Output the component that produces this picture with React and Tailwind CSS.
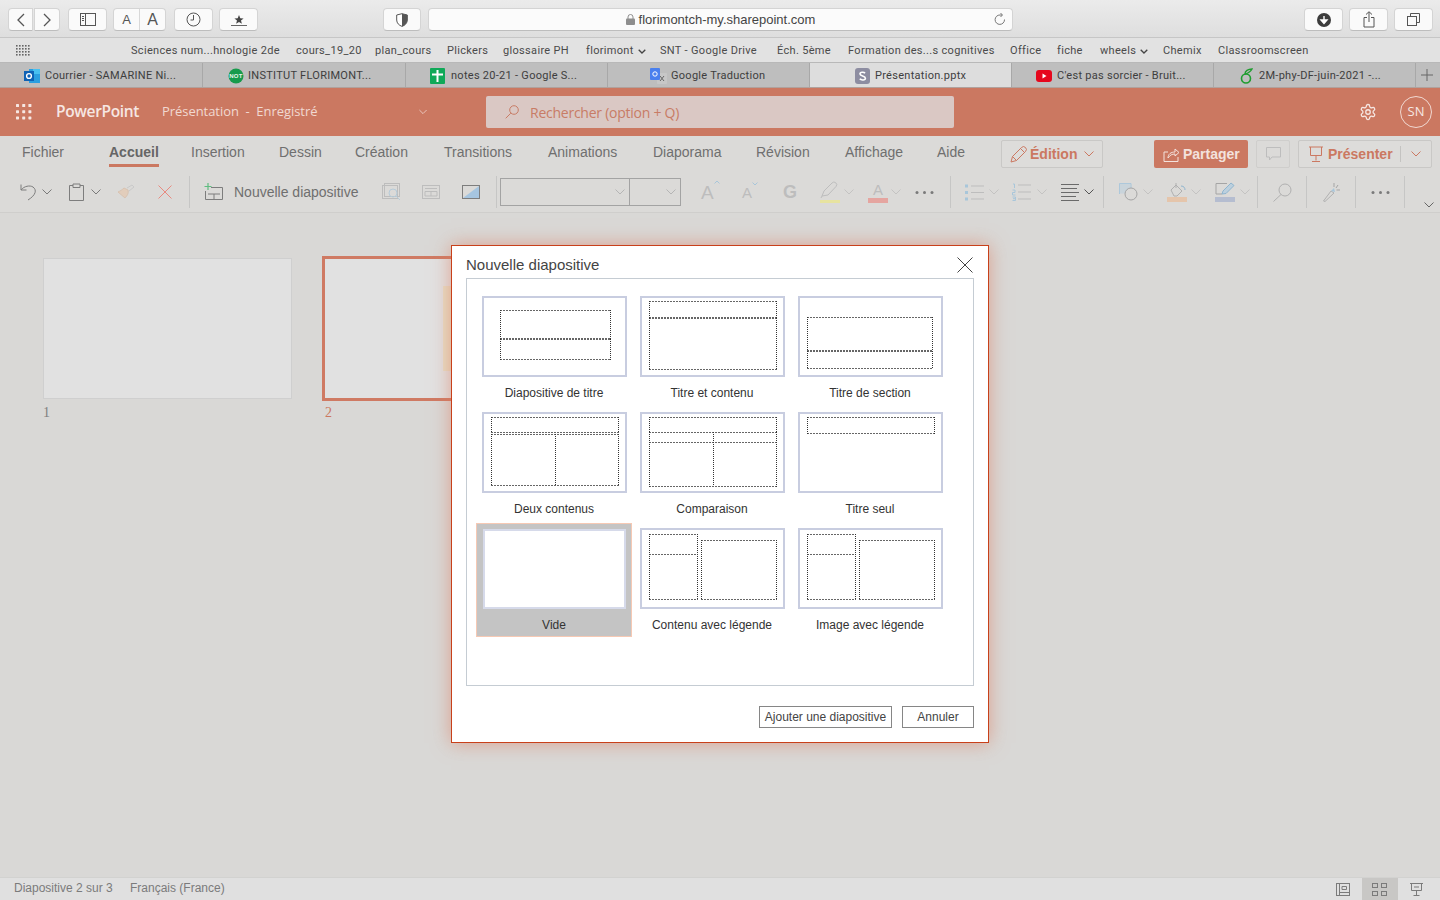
import React from "react";

const I = ({ w = 18, h = 18, c = "", children, sw = 1 }) => (
  <svg width={w} height={h} viewBox={`0 0 ${w} ${h}`} fill="none" stroke="currentColor" strokeWidth={sw} className={`shrink-0 ${c}`}>
    {children}
  </svg>
);

const Chev = ({ c = "", color = "text-[#b5b5b5]" }) => (
  <I w={10} h={6} c={`${color} ${c}`}><path d="M0.5 0.5 L5 5 L9.5 0.5" /></I>
);

const MiniChev = () => (
  <svg width="8" height="5" viewBox="0 0 8 5" fill="none" stroke="#444" strokeWidth="1.3" className="ml-[4px] shrink-0"><path d="M0.7 0.7 L4 4 L7.3 0.7" /></svg>
);

const Sep = ({ c = "" }) => <div className={`w-px h-[32px] bg-[#c6c6c5] shrink-0 ${c}`} />;

const MacBtn = ({ c = "", children }) => (
  <div className={`h-[23px] flex items-center justify-center bg-[#fafafa] border border-[#d4d4d4] border-b-[#bdbdbd] rounded-[4px] text-[#555] shrink-0 ${c}`}>
    {children}
  </div>
);

const marks = [
  ["Sciences num...hnologie 2de", "w-[165px]"],
  ["cours_19_20", "w-[79px]"],
  ["plan_cours", "w-[72px]"],
  ["Plickers", "w-[56px]"],
  ["glossaire PH", "w-[83px]"],
  ["florimont", "w-[74px]", true],
  ["SNT - Google Drive", "w-[117px]"],
  ["Éch. 5ème", "w-[71px]"],
  ["Formation des...s cognitives", "w-[162px]"],
  ["Office", "w-[47px]"],
  ["fiche", "w-[43px]"],
  ["wheels", "w-[63px]", true],
  ["Chemix", "w-[55px]"],
  ["Classroomscreen", "w-[110px]"],
];

const Fav = {
  outlook: (
    <svg width="16" height="16" viewBox="0 0 16 16" className="shrink-0">
      <rect x="5" y="1" width="11" height="14" fill="#2b9fe0" />
      <rect x="9" y="1" width="7" height="5" fill="#48c0f0" />
      <rect x="0" y="3" width="10" height="10" fill="#0f62b5" />
      <circle cx="5" cy="8" r="2.4" fill="none" stroke="#fff" strokeWidth="1.4" />
    </svg>
  ),
  not: (
    <svg width="16" height="16" viewBox="0 0 16 16" className="shrink-0">
      <circle cx="8" cy="8" r="7.5" fill="#179b4c" />
      <text x="8" y="10" textAnchor="middle" fontSize="6" fontWeight="700" fill="#e9f6ee" fontFamily="Liberation Sans">NOT</text>
    </svg>
  ),
  sheets: (
    <svg width="15" height="16" viewBox="0 0 15 16" className="shrink-0">
      <rect width="15" height="16" rx="1" fill="#0fa958" />
      <path d="M2 6.5 H13 M7.5 2 V14" stroke="#fff" strokeWidth="2" />
    </svg>
  ),
  translate: (
    <svg width="17" height="16" viewBox="0 0 17 16" className="shrink-0">
      <rect x="7" y="5" width="10" height="11" rx="1" fill="#c7c7c7" />
      <path d="M10 13 L14 8 M10 8 L14 13" stroke="#666" strokeWidth="1" />
      <rect width="10" height="12" rx="1" fill="#4a80ee" />
      <circle cx="5" cy="6" r="2.2" fill="none" stroke="#fff" strokeWidth="1" />
    </svg>
  ),
  s: (
    <svg width="15" height="16" viewBox="0 0 15 16" className="shrink-0">
      <rect width="15" height="16" rx="3" fill="#8d8da1" />
      <path d="M10 5.2 C9 3.8 5 3.8 5 6 C5 8.3 10.4 7.7 10.4 10.2 C10.4 12.4 6 12.4 4.8 10.8" fill="none" stroke="#fff" strokeWidth="1.6" />
    </svg>
  ),
  yt: (
    <svg width="16" height="12" viewBox="0 0 16 12" className="shrink-0">
      <rect width="16" height="12" rx="3" fill="#e6071d" />
      <path d="M6.5 3.5 L10.5 6 L6.5 8.5 Z" fill="#fff" />
    </svg>
  ),
  sheet2: (
    <svg width="13" height="16" viewBox="0 0 13 16" fill="none" className="shrink-0">
      <circle cx="6" cy="10.5" r="4.5" stroke="#1f9d2f" strokeWidth="1.6" />
      <path d="M5 6 C5 3 8 1 12 1 C11 3 9 5 5 6 Z" stroke="#1f9d2f" strokeWidth="1.4" />
    </svg>
  ),
};

const tabs = [
  ["Courrier - SAMARINE Ni...", "outlook", "w-[203px] pl-[24px]", "ml-[5px]"],
  ["INSTITUT FLORIMONT...", "not", "w-[203px] pl-[25px]", "ml-[4px]"],
  ["notes 20-21 - Google S...", "sheets", "w-[202px] pl-[24px]", "ml-[6px]"],
  ["Google Traduction", "translate", "w-[202px] pl-[42px]", "ml-[4px]"],
  ["Présentation.pptx", "s", "w-[202px] pl-[45px] bg-[#dddddd]", "ml-[5px]"],
  ["C'est pas sorcier - Bruit...", "yt", "w-[202px] pl-[24px]", "ml-[5px]"],
  ["2M-phy-DF-juin-2021 -...", "sheet2", "w-[202px] pl-[26px]", "ml-[6px]"],
];

const ribbon = [
  ["Fichier", "w-[87px]"],
  ["Accueil", "w-[82px]", true],
  ["Insertion", "w-[88px]"],
  ["Dessin", "w-[76px]"],
  ["Création", "w-[89px]"],
  ["Transitions", "w-[104px]"],
  ["Animations", "w-[105px]"],
  ["Diaporama", "w-[103px]"],
  ["Révision", "w-[89px]"],
  ["Affichage", "w-[92px]"],
  ["Aide", "w-[64px]"],
];

const D = ({ x, y, w, h }) => (
  <g fill="none" strokeWidth="1">
    <path d={`M${x} ${y + 0.5} H${x + w + 1} M${x} ${y + h + 0.5} H${x + w + 1}`} stroke="#666" strokeDasharray="2 1" />
    <path d={`M${x + 0.5} ${y} V${y + h + 1} M${x + w + 0.5} ${y} V${y + h + 1}`} stroke="#333" strokeDasharray="1 1" />
  </g>
);

const V = ({ x, y, h }) => (
  <path d={`M${x + 0.5} ${y} V${y + h}`} fill="none" stroke="#333" strokeWidth="1" strokeDasharray="1 1" />
);

const layouts = [
  { n: "Diapositive de titre", r: [[18, 14, 110, 28], [18, 43, 110, 20]] },
  { n: "Titre et contenu", r: [[9, 5, 127, 16], [9, 22, 127, 51]] },
  { n: "Titre de section", r: [[9, 21, 125, 33], [9, 55, 125, 17]] },
  { n: "Deux contenus", r: [[9, 5, 127, 15], [9, 22, 127, 51]], v: [73, 22, 51] },
  { n: "Comparaison", r: [[9, 5, 127, 15], [9, 20, 127, 10], [9, 30, 127, 44]], v: [73, 20, 54] },
  { n: "Titre seul", r: [[9, 5, 127, 16]] },
  { n: "Vide", r: [], sel: true },
  { n: "Contenu avec légende", r: [[9, 6, 48, 20], [9, 26, 48, 45], [61, 12, 75, 59]] },
  { n: "Image avec légende", r: [[9, 6, 48, 20], [9, 26, 48, 45], [61, 12, 75, 59]] },
];

const Tile = ({ n, r, sel, v }) => (
  <div className={sel ? "w-[156px] h-[114px] mt-px border border-[#f6c9b4] bg-[#c4c4c4] pt-[5px] pl-[6px]" : "w-[156px] h-[116px] pt-[6px] pl-[6px]"}>
    <div className={sel ? "w-[143px] h-[80px] bg-white border-2 border-[#d6daea]" : "w-[145px] h-[81px] bg-white border-2 border-[#c8cde0]"}>
      {!sel && (
        <svg width="141" height="77" viewBox="2 2 141 77" shapeRendering="crispEdges" className="block">
          {r.map((q, i) => <D key={i} x={q[0]} y={q[1]} w={q[2]} h={q[3]} />)}
          {v && <V x={v[0]} y={v[1]} h={v[2]} />}
        </svg>
      )}
    </div>
    <div className={`text-[12px] text-[#333] text-center h-[32px] leading-[32px] ${sel ? "w-[142px]" : "w-[144px]"}`}>{n}</div>
  </div>
);

export default function App() {
  return (
    <div className="relative w-[1440px] h-[900px] overflow-hidden flex flex-col bg-[#d9d8d6] font-['Liberation_Sans',Arial,sans-serif]">
      {/* Safari toolbar */}
      <div className="h-[38px] shrink-0 flex items-center pt-[2px] bg-gradient-to-b from-[#ebebeb] to-[#dedede] border-b border-[#c6c6c6]">
        <MacBtn c="ml-[8px] w-[25px] rounded-r-none"><I w={10} h={14}><path d="M8 1 L2 7 L8 13" strokeWidth="1.3" /></I></MacBtn>
        <MacBtn c="ml-px w-[26px] rounded-l-none"><I w={10} h={14}><path d="M2 1 L8 7 L2 13" strokeWidth="1.3" /></I></MacBtn>
        <MacBtn c="ml-[8px] w-[39px]"><I w={16} h={13}><rect x="0.5" y="0.5" width="15" height="12" /><path d="M5.5 1 V12 M2 3.5 H4 M2 5.5 H4 M2 7.5 H4" /></I></MacBtn>
        <MacBtn c="ml-[6px] w-[53px] text-[#555]">
          <span className="text-[13px] w-[26px] text-center">A</span>
          <span className="w-px h-[21px] bg-[#d8d8d8]" />
          <span className="text-[16px] w-[26px] text-center">A</span>
        </MacBtn>
        <MacBtn c="ml-[8px] w-[39px]"><I w={15} h={15}><circle cx="7.5" cy="7.5" r="6.5" /><path d="M7.5 3 V8 H4.5" /></I></MacBtn>
        <MacBtn c="ml-[6px] w-[39px]">
          <svg width="16" height="12" viewBox="0 0 16 12" className="shrink-0"><path d="M8 1 L9.3 4.2 L12.6 4.4 L10 6.5 L10.9 9.7 L8 7.9 L5.1 9.7 L6 6.5 L3.4 4.4 L6.7 4.2 Z" fill="#444" /><path d="M0 11.5 H16" stroke="#666" /></svg>
        </MacBtn>
        <MacBtn c="ml-[125px] w-[38px]">
          <svg width="12" height="14" viewBox="0 0 12 14" className="shrink-0"><path d="M6 0.7 L11.3 2 V7 C11.3 10 9 12.4 6 13.4 C3 12.4 0.7 10 0.7 7 V2 Z" fill="#fff" stroke="#555" /><path d="M6 0.7 V13.4 C9 12.4 11.3 10 11.3 7 V2 Z" fill="#555" /></svg>
        </MacBtn>
        <div className="ml-[7px] w-[585px] h-[23px] relative flex items-center justify-center bg-[#fbfbfb] border border-[#d4d4d4] border-b-[#bdbdbd] rounded-[4px] text-[13px] text-[#444]">
          <svg width="9" height="11" viewBox="0 0 9 11" className="mr-[4px] shrink-0"><rect y="4.5" width="9" height="6.5" rx="1" fill="#8e8e8e" /><path d="M2 5 V3 A2.5 2.5 0 0 1 7 3 V5" fill="none" stroke="#8e8e8e" /></svg>
          florimontch-my.sharepoint.com
          <svg width="12" height="13" viewBox="0 0 12 13" fill="none" stroke="#777" className="absolute right-[6px] top-[4px]"><path d="M10.5 6.5 A4.7 4.7 0 1 1 6 2 H8 M6.5 0 L8.5 2 L6.5 4" /></svg>
        </div>
        <MacBtn c="ml-[291px] w-[39px]">
          <svg width="14" height="14" viewBox="0 0 14 14" className="shrink-0"><circle cx="7" cy="7" r="7" fill="#3c3c3c" /><path d="M7 3 V8 M4 7 L7 10.5 L10 7 Z" stroke="#fff" fill="#fff" strokeWidth="1.4" /></svg>
        </MacBtn>
        <MacBtn c="ml-[6px] w-[39px]"><I w={12} h={17}><path d="M6 11 V1 M3 3.5 L6 0.7 L9 3.5 M4 6.5 H1 V16 H11 V6.5 H8" /></I></MacBtn>
        <MacBtn c="ml-[6px] w-[39px]"><I w={13} h={13}><rect x="0.5" y="3.5" width="9" height="9" /><path d="M3.5 3.5 V0.5 H12.5 V9.5 H9.5" /></I></MacBtn>
      </div>

      {/* Bookmarks */}
      <div className="h-[25px] shrink-0 flex items-center pt-[3px] bg-[#e2e2e2] border-b border-[#b8b8b8] text-[11px] text-[#4a4a4a] font-['Roboto',sans-serif] tracking-[0.32px]">
        <svg width="15" height="12" viewBox="0 0 15 12" className="ml-[16px] mr-[100px] shrink-0 -mt-[2px]" fill="#666">
          {[0, 1, 2, 3].flatMap((y) => [0, 1, 2, 3, 4].map((x) => <rect key={`${x}${y}`} x={x * 3} y={y * 3} width="1.6" height="1.6" />))}
        </svg>
        {marks.map(([t, w, ch]) => (
          <div key={t} className={`${w} flex items-center shrink-0 whitespace-nowrap`}>
            {t}
            {ch && <MiniChev />}
          </div>
        ))}
      </div>

      {/* Tabs */}
      <div className="h-[25px] shrink-0 flex items-center bg-[#bebebe] border-b border-[#b0a29d] text-[11px] text-[#3d3d3d] font-['Roboto',sans-serif] tracking-[0.28px]">
        {tabs.map(([t, f, c, m]) => (
          <div key={t} className={`${c} h-full flex items-center pt-[2px] shrink-0 border-r border-[#a8a8a8] whitespace-nowrap`}>
            {Fav[f]}
            <span className={m}>{t}</span>
          </div>
        ))}
        <I w={12} h={12} c="ml-[5px] text-[#666]"><path d="M6 0 V12 M0 6 H12" /></I>
      </div>

      {/* PowerPoint header */}
      <div className="h-[48px] shrink-0 flex items-center bg-[#cb7861] text-[#f6e7e3] font-['Open_Sans',sans-serif]">
        <svg width="16" height="16" viewBox="0 0 16 16" fill="#f6e7e3" className="ml-[16px] shrink-0">
          {[0, 1, 2].flatMap((y) => [0, 1, 2].map((x) => <rect key={`${x}${y}`} x={x * 6.2} y={y * 6.2} width="3" height="3" rx="0.6" />))}
        </svg>
        <span className="ml-[24px] w-[106px] text-[15.5px] font-semibold tracking-[-0.35px]">PowerPoint</span>
        <span className="text-[13px] w-[257px] text-[#f1d8d1] tracking-[-0.05px] whitespace-pre">Présentation  -  Enregistré</span>
        <Chev c="!w-[8px]" color="text-[#f1d8d1]" />
        <div className="ml-[59px] w-[468px] h-[32px] rounded-[2px] bg-[#dac8c4] flex items-center text-[#c87c66] text-[14px] tracking-[-0.25px] shrink-0">
          <I w={14} h={14} c="ml-[19px]"><circle cx="9" cy="5" r="4.3" /><path d="M5.8 8.2 L0.7 13.3" /></I>
          <span className="ml-[11px]">Rechercher (option + Q)</span>
        </div>
        <svg width="18" height="18" viewBox="0 0 24 24" fill="none" stroke="#f6e7e3" strokeWidth="1.7" className="ml-[405px] shrink-0">
          <path d="M12.2 2h-.4a2 2 0 0 0-2 2v.2a2 2 0 0 1-1 1.7l-.4.3a2 2 0 0 1-2 0l-.2-.1a2 2 0 0 0-2.7.7l-.2.4a2 2 0 0 0 .7 2.7l.2.1a2 2 0 0 1 1 1.7v.5a2 2 0 0 1-1 1.8l-.2.1a2 2 0 0 0-.7 2.7l.2.4a2 2 0 0 0 2.7.7l.2-.1a2 2 0 0 1 2 0l.4.3a2 2 0 0 1 1 1.7v.2a2 2 0 0 0 2 2h.4a2 2 0 0 0 2-2v-.2a2 2 0 0 1 1-1.7l.4-.3a2 2 0 0 1 2 0l.2.1a2 2 0 0 0 2.7-.7l.2-.4a2 2 0 0 0-.7-2.7l-.2-.1a2 2 0 0 1-1-1.8v-.5a2 2 0 0 1 1-1.7l.2-.1a2 2 0 0 0 .7-2.7l-.2-.4a2 2 0 0 0-2.7-.7l-.2.1a2 2 0 0 1-2 0l-.4-.3a2 2 0 0 1-1-1.7V4a2 2 0 0 0-2-2z" />
          <circle cx="12" cy="12" r="3" />
        </svg>
        <div className="ml-[23px] w-[32px] h-[32px] rounded-full border border-[#f1d8d1] flex items-center justify-center text-[13px] shrink-0">SN</div>
      </div>

      {/* Ribbon tabs */}
      <div className="h-[40px] shrink-0 flex items-start bg-[#dbdad8] text-[14px] text-[#6f6f6f]">
        <div className="w-[22px] shrink-0" />
        {ribbon.map(([t, w, active]) => (
          <div key={t} className={`${w} shrink-0 pt-[8px] -mt-[2px]`}>
            <span className={active ? "inline-block h-[25px] border-b-[3px] border-[#cb7861] font-bold text-[#666]" : "inline-block h-[25px]"}>{t}</span>
          </div>
        ))}
        <div className="mt-[4px] w-[102px] h-[28px] shrink-0 rounded-[2px] border border-[#c9c8c6] bg-[#dddcda] flex items-center text-[#cb7861] font-bold">
          <I w={17} h={17} c="ml-[8px]"><path d="M1 16 L2.5 10.5 L11.5 1.5 A1.5 1.5 0 0 1 15.5 5.5 L6.5 14.5 Z M10.5 2.5 L14.5 6.5 M2.5 10.5 L6.5 14.5" /></I>
          <span className="ml-[3px]">Édition</span>
          <Chev c="ml-[7px]" color="text-[#cb7861]" />
        </div>
        <div className="ml-[51px] mt-[4px] w-[94px] h-[28px] shrink-0 rounded-[2px] bg-[#cb7861] flex items-center text-[#f3e2dd] font-bold">
          <I w={16} h={16} c="ml-[9px]"><path d="M1 15.5 V6 H5 M15 11 V15.5 H1 M5 12 C5 8 8 6 12 6 V3 L16 6.5 L12 10 V8 C9 8 7 9 5 12 Z" /></I>
          <span className="ml-[4px]">Partager</span>
        </div>
        <div className="ml-[8px] mt-[4px] w-[34px] h-[28px] shrink-0 rounded-[2px] border border-[#cfcecc] flex items-center justify-center text-[#bdbdbd]">
          <I w={15} h={14}><path d="M0.5 0.5 H14.5 V10 H6 L3.5 13 V10 H0.5 Z" /></I>
        </div>
        <div className="ml-[8px] mt-[4px] w-[134px] h-[28px] shrink-0 rounded-[2px] border border-[#c9c8c6] bg-[#dddcda] flex items-center text-[#cb7861] font-bold">
          <I w={14} h={16} c="ml-[10px]"><path d="M0 1 H14 M1.5 1 V9.5 H12.5 V1 M7 9.5 V14.5 M3 15.5 H11" /></I>
          <span className="ml-[5px]">Présenter</span>
          <span className="ml-[7px] w-px h-[16px] bg-[#c4c3c1]" />
          <Chev c="ml-[10px]" color="text-[#cb7861]" />
        </div>
      </div>

      {/* Command bar */}
      <div className="h-[37px] shrink-0 flex items-center pb-[4px] bg-[#dbdad8] border-b border-[#cfcecc] text-[#8a8a8a]">
        <I w={18} h={18} c="ml-[20px] text-[#7d7d7d]"><path d="M1 1.5 V7 H6.5 M1 7 C4 3 10 2 13 4 C17 7 16 12 8 17" /></I>
        <Chev c="ml-[4px]" color="text-[#7a7a7a]" />
        <I w={15} h={18} c="ml-[17px] text-[#7d7d7d]"><path d="M4 2.5 H0.5 V17.5 H14.5 V2.5 H11 M4 1 H11 V4.5 H4 Z" /></I>
        <Chev c="ml-[7px]" color="text-[#7a7a7a]" />
        <svg width="18" height="16" viewBox="0 0 18 16" fill="none" stroke="#d8c3b2" className="ml-[16px] shrink-0"><path d="M1 8 L8 14 C10 12 12 9 11 6 L7 4 C5 6 3 7 1 8 Z" fill="#e2cdbb" /><path d="M10 4 L15 1 L17 3 L12 7" stroke="#c9c9c9" /></svg>
        <I w={14} h={14} c="ml-[23px] text-[#e88a80]"><path d="M0.5 0.5 L13.5 13.5 M13.5 0.5 L0.5 13.5" /></I>
        <Sep c="ml-[17px]" />
        <svg width="20" height="18" viewBox="0 0 20 18" fill="none" className="ml-[14px] shrink-0"><path d="M7 4.5 H18.5 V16.5 H1.5 V8 M4 11 H16 M10 11 V16" stroke="#7d7d7d" /><path d="M4 0 V7 M0.5 3.5 H7.5" stroke="#5fbd80" strokeWidth="1.2" /></svg>
        <span className="ml-[10px] w-[124px] text-[14px] text-[#6f6f6f] whitespace-nowrap">Nouvelle diapositive</span>
        <svg width="20" height="18" viewBox="0 0 20 18" fill="none" stroke="#bdbdbd" className="ml-[24px] shrink-0"><rect x="2.5" y="0.5" width="15" height="13" /><rect x="0.5" y="2.5" width="15" height="13" /><circle cx="11" cy="10" r="4" stroke="#b6cbd8" /><path d="M14 13 L18 17" stroke="#b6cbd8" /></svg>
        <I w={18} h={14} c="ml-[20px] text-[#bdbdbd]"><rect x="0.5" y="0.5" width="17" height="13" /><path d="M3 3.5 H15 M3 6.5 H15 V11 H3 Z M9 6.5 V11" /></I>
        <svg width="18" height="14" viewBox="0 0 18 14" className="ml-[22px] shrink-0"><path d="M1 13 L17 1 V13 Z" fill="#a6c5e0" /><rect x="0.5" y="0.5" width="17" height="13" fill="none" stroke="#7d7d7d" /></svg>
        <Sep c="ml-[16px]" />
        <div className="ml-[3px] w-[181px] h-[28px] shrink-0 border border-[#a3a3a3] flex">
          <div className="w-[129px] border-r border-[#a3a3a3] flex items-center justify-end pr-[4px]"><Chev /></div>
          <div className="flex-1 flex items-center justify-end pr-[4px]"><Chev /></div>
        </div>
        <div className="ml-[20px] w-[18px] shrink-0 relative text-[19px] text-[#bdbdbd] leading-none">
          A
          <svg width="6" height="4" viewBox="0 0 6 4" fill="none" stroke="#a8c6da" className="absolute left-[13px] top-[-3px]"><path d="M0.5 3.5 L3 1 L5.5 3.5" /></svg>
        </div>
        <div className="ml-[23px] w-[17px] shrink-0 relative text-[15px] text-[#bdbdbd] leading-none">
          A
          <svg width="6" height="4" viewBox="0 0 6 4" fill="none" stroke="#a8c6da" className="absolute left-[10px] top-[-3px]"><path d="M0.5 0.5 L3 3 L5.5 0.5" /></svg>
        </div>
        <div className="ml-[24px] w-[14px] shrink-0 text-[18px] font-bold text-[#bdbdbd] leading-none">G</div>
        <svg width="20" height="22" viewBox="0 0 20 22" fill="none" className="ml-[23px] shrink-0"><path d="M2 15 L4 10 L12 2 A2.5 2.5 0 0 1 16 5.5 L8 14 Z M2 15 L1 17" stroke="#bdbdbd" /><rect y="19" width="20" height="3" fill="#e7e3a0" /></svg>
        <Chev c="ml-[4px] opacity-60" />
        <div className="ml-[14px] w-[20px] shrink-0 flex flex-col items-center">
          <span className="text-[15px] leading-[15px] text-[#bdbdbd]">A</span>
          <span className="w-[20px] h-[5px] bg-[#e5a5a0] mt-[1px]" />
        </div>
        <Chev c="ml-[3px] opacity-60" />
        <svg width="19" height="3" viewBox="0 0 19 3" fill="#7a7a7a" className="ml-[14px] shrink-0"><circle cx="2" cy="1.5" r="1.5" /><circle cx="9.5" cy="1.5" r="1.5" /><circle cx="17" cy="1.5" r="1.5" /></svg>
        <Sep c="ml-[16px]" />
        <svg width="19" height="17" viewBox="0 0 19 17" fill="none" className="ml-[14px] shrink-0"><path d="M6 2 H19 M6 8.5 H19 M6 15 H19" stroke="#bdbdbd" /><path d="M0 0.5 H3 V3.5 H0 Z M0 7 H3 V10 H0 Z M0 13.5 H3 V16.5 H0 Z" fill="#a8c6da" /></svg>
        <Chev c="ml-[5px] opacity-60" />
        <svg width="19" height="18" viewBox="0 0 19 18" fill="none" className="ml-[13px] shrink-0"><path d="M6 2 H19 M6 9 H19 M6 16 H19" stroke="#bdbdbd" /><path d="M1 1 H2.5 V5 M0.5 7 H3 V9.5 H0.5 V12 H3.5 M0.5 14 H3.5 V17.5 H0.5 M1 15.7 H3" stroke="#a8c6da" /></svg>
        <Chev c="ml-[6px] opacity-60" />
        <I w={19} h={17} c="ml-[14px] text-[#6a6a6a]"><path d="M0 0.5 H18 M0 4.5 H16 M0 8.5 H18 M0 12.5 H15 M0 16.5 H18" /></I>
        <Chev c="ml-[4px]" color="text-[#555]" />
        <Sep c="ml-[9px]" />
        <svg width="19" height="18" viewBox="0 0 19 18" fill="none" className="ml-[15px] shrink-0"><path d="M0.5 11 V0.5 H12 V5" stroke="#a8c6da" /><rect x="0.5" y="0.5" width="11" height="10" fill="#bcd0de" fillOpacity="0.6" /><circle cx="12" cy="11" r="6" fill="#dbdad8" stroke="#a5a5a5" /></svg>
        <Chev c="ml-[5px] opacity-60" />
        <svg width="20" height="20" viewBox="0 0 20 20" fill="none" className="ml-[14px] shrink-0"><path d="M4 8 L9 3 L15 9 L10 14 H7 Z M9 1 V6" stroke="#b0b0b0" /><path d="M14 4 C17 4 18 6 18 8" stroke="#8fb5cf" /><rect y="15" width="20" height="5" fill="#e5c5ab" /></svg>
        <Chev c="ml-[4px] opacity-60" />
        <svg width="20" height="20" viewBox="0 0 20 20" fill="none" className="ml-[14px] shrink-0"><path d="M12 1.5 H1 V12 H7" stroke="#a5a5a5" /><path d="M7 12 L8 9 L16 1 L19 3.5 L11 11.5 Z" fill="#bcd0de" stroke="#8fb5cf" /><rect y="15" width="20" height="5" fill="#b5bdd0" /></svg>
        <Chev c="ml-[5px] opacity-60" />
        <Sep c="ml-[7px]" />
        <I w={19} h={19} c="ml-[15px] text-[#b0b0b0]"><circle cx="12" cy="7" r="6" /><path d="M8 11.5 L0.5 18.5" /></I>
        <Sep c="ml-[14px]" />
        <svg width="17" height="19" viewBox="0 0 17 19" fill="none" className="ml-[16px] shrink-0"><path d="M0.5 18 L8 8 L11 10 L2 18.5 Z" stroke="#b0b0b0" /><path d="M11 0 V4 M15 2 L13 5 M17 7 H13.5" stroke="#a5a5a5" /><path d="M8 8 L11 5 L12 9 Z" fill="#a8c6da" /></svg>
        <Sep c="ml-[15px]" />
        <svg width="19" height="3" viewBox="0 0 19 3" fill="#7a7a7a" className="ml-[15px] shrink-0"><circle cx="2" cy="1.5" r="1.5" /><circle cx="9.5" cy="1.5" r="1.5" /><circle cx="17" cy="1.5" r="1.5" /></svg>
        <Sep c="ml-[14px]" />
        <Chev c="ml-[19px] mt-[26px]" color="text-[#666]" />
      </div>

      {/* Canvas */}
      <div className="flex-1 flex items-start pl-[43px] pt-[43px] font-['Liberation_Serif',serif] text-[14px]">
        <div className="w-[249px] shrink-0 mt-[2px]">
          <div className="h-[141px] bg-[#e1e1e1] border border-[#cfcfcf]" />
          <div className="mt-[3px] text-[#7f7f7f]">1</div>
        </div>
        <div className="ml-[30px] w-[251px] shrink-0">
          <div className="h-[145px] bg-[#e1e1e1] border-[3px] border-[#cf7a63] flex items-center justify-end pr-[118px]">
            <div className="w-[9px] h-[85px] bg-[#e6dcc4]" />
          </div>
          <div className="mt-px pl-[3px] text-[#cb7861]">2</div>
        </div>
      </div>

      {/* Status bar */}
      <div className="h-[23px] shrink-0 flex items-center bg-[#e0e0e0] border-t border-[#d2d2d0] text-[12px] text-[#7b7b7b]">
        <span className="ml-[14px] w-[116px] -mt-[3px]">Diapositive 2 sur 3</span>
        <span className="-mt-[3px]">Français (France)</span>
        <I w={14} h={13} c="ml-[1111px] text-[#7b7b7b]"><rect x="0.5" y="0.5" width="13" height="12" /><path d="M3.5 0.5 V12.5 M3.5 9.5 H13.5 M6 3.5 H10.5 V6.5 H6 Z" /></I>
        <div className="ml-[12px] w-[36px] h-[22px] bg-[#c8c7c5] flex items-center justify-center shrink-0">
          <I w={15} h={13} c="text-[#7b7b7b]"><rect x="0.5" y="0.5" width="5" height="4" /><rect x="9.5" y="0.5" width="5" height="4" /><rect x="0.5" y="8.5" width="5" height="4" /><rect x="9.5" y="8.5" width="5" height="4" /></I>
        </div>
        <I w={13} h={13} c="ml-[12px] text-[#7b7b7b]"><path d="M0 0.5 H13 M1.5 0.5 V7.5 H11.5 V0.5 M4 4 H9 M6.5 7.5 V12 M3.5 12.5 H9.5" /></I>
      </div>

      {/* Dialog */}
      <div className="absolute left-[451px] top-[245px] w-[538px] h-[498px] bg-white border border-[#c8401a] shadow-[0_0_18px_rgba(220,120,90,0.6)] pl-[14px] pr-[14px] flex flex-col">
        <div className="h-[32px] shrink-0 flex items-center justify-between">
          <span className="text-[15px] text-[#444] mt-[7px]">Nouvelle diapositive</span>
          <I w={16} h={16} c="text-[#444] mt-[5px] mr-[1px]"><path d="M0.5 0.5 L15.5 15.5 M15.5 0.5 L0.5 15.5" /></I>
        </div>
        <div className="h-[408px] shrink-0 border border-[#c5ccd3] pl-[9px] pt-[11px]">
          <div className="grid grid-cols-[repeat(3,158px)] auto-rows-[116px]">
            {layouts.map((l) => <Tile key={l.n} {...l} />)}
          </div>
        </div>
        <div className="mt-[20px] flex justify-end gap-[10px] text-[12px] text-[#444]">
          <div className="w-[133px] h-[22px] border border-[#868686] flex items-center justify-center">Ajouter une diapositive</div>
          <div className="w-[72px] h-[22px] border border-[#868686] flex items-center justify-center">Annuler</div>
        </div>
      </div>
    </div>
  );
}
